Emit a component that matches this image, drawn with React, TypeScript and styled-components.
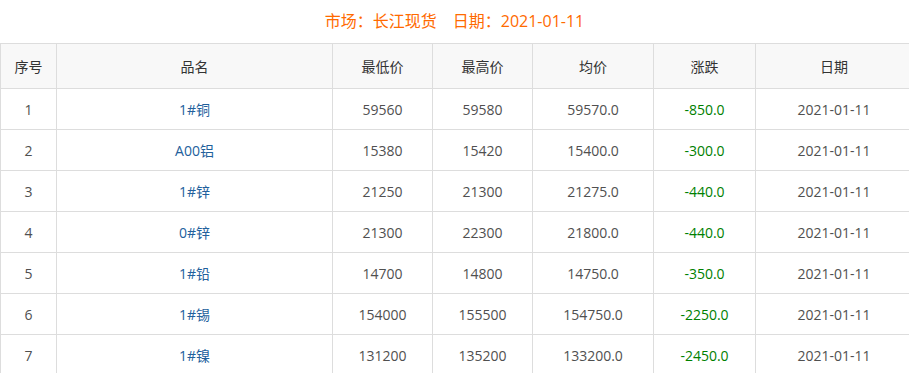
import React from "react";
import styled, { createGlobalStyle } from "styled-components";

const GlobalStyle = createGlobalStyle`
  html, body {
    margin: 0;
    padding: 0;
    background: #ffffff;
    overflow: hidden;
  }
  body {
    font-family: "Open Sans", "Noto Sans CJK SC", sans-serif;
  }
`;

const Page = styled.div`
  width: 912px;
`;

const Title = styled.div`
  width: 909px;
  height: 43px;
  line-height: 42px;
  text-align: center;
  font-size: 16px;
  color: #ff6a00;
  font-family: "Open Sans", "Noto Sans CJK SC", sans-serif;
`;

const Table = styled.table`
  border-collapse: collapse;
  table-layout: fixed;
  width: 912px;
  font-size: 14px;
  font-family: "Open Sans", "Noto Sans CJK SC", sans-serif;
`;

const HeadCell = styled.th`
  height: 44px;
  padding: 0;
  border: 1px solid #dddddd;
  background: #f8f8f8;
  color: #333333;
  font-weight: normal;
  text-align: center;
  vertical-align: middle;
`;

type Tone = "plain" | "name" | "change";

const toneColor: Record<Tone, string> = {
  plain: "#505050",
  name: "#22609c",
  change: "#008000",
};

const Cell = styled.td<{ $tone?: Tone }>`
  height: 40px;
  padding: 0;
  border: 1px solid #dddddd;
  text-align: center;
  vertical-align: middle;
  color: ${(p) => toneColor[p.$tone ?? "plain"]};
`;

const widths = [56, 276, 100, 100, 121, 102, 157];
const headers = ["序号", "品名", "最低价", "最高价", "均价", "涨跌", "日期"];

const rows = [
  ["1", "1#铜", "59560", "59580", "59570.0", "-850.0"],
  ["2", "A00铝", "15380", "15420", "15400.0", "-300.0"],
  ["3", "1#锌", "21250", "21300", "21275.0", "-440.0"],
  ["4", "0#锌", "21300", "22300", "21800.0", "-440.0"],
  ["5", "1#铅", "14700", "14800", "14750.0", "-350.0"],
  ["6", "1#锡", "154000", "155500", "154750.0", "-2250.0"],
  ["7", "1#镍", "131200", "135200", "133200.0", "-2450.0"],
];

export default function App() {
  return (
    <Page>
      <GlobalStyle />
      <Title>市场：长江现货　日期：2021-01-11</Title>
      <Table>
        <colgroup>
          {widths.map((w, i) => (
            <col key={i} style={{ width: w }} />
          ))}
        </colgroup>
        <thead>
          <tr>
            {headers.map((h) => (
              <HeadCell key={h}>{h}</HeadCell>
            ))}
          </tr>
        </thead>
        <tbody>
          {rows.map((r) => (
            <tr key={r[0]}>
              <Cell>{r[0]}</Cell>
              <Cell $tone="name">{r[1]}</Cell>
              <Cell>{r[2]}</Cell>
              <Cell>{r[3]}</Cell>
              <Cell>{r[4]}</Cell>
              <Cell $tone="change">{r[5]}</Cell>
              <Cell>2021-01-11</Cell>
            </tr>
          ))}
        </tbody>
      </Table>
    </Page>
  );
}
